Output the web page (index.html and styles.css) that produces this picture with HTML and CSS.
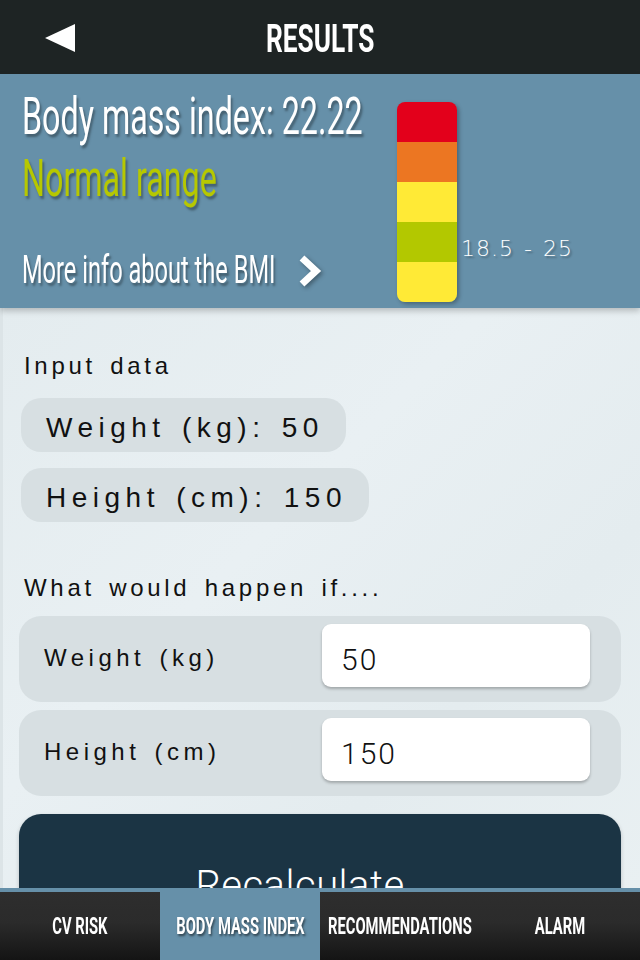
FILE: index.html
```html
<!DOCTYPE html>
<html lang="en">
<head>
<meta charset="utf-8">
<title>Results</title>
<link rel="stylesheet" href="styles.css">
</head>
<body>
<div class="app">
  <header class="topbar">
    <div class="topbar-left">
      <svg class="back" width="30" height="28" viewBox="0 0 30 28"><polygon points="0,14 30,0 30,28" fill="#fff"/></svg>
    </div>
    <h1 class="title"><span class="cond cond-title">RESULTS</span></h1>
    <div></div>
  </header>

  <section class="bmi">
    <div class="bmi-info">
      <div class="bmi-value"><span class="cond cond-big">Body mass index: 22.22</span></div>
      <div class="bmi-range"><span class="cond cond-big">Normal range</span></div>
      <div class="bmi-more">
        <span class="more-text"><span class="cond cond-more">More info about the BMI</span></span>
        <svg class="chevron" width="24" height="34" viewBox="0 0 24 34"><polyline points="4,4 18,17 4,30" fill="none" stroke="#fff" stroke-width="7" stroke-linejoin="miter"/></svg>
      </div>
    </div>
    <div class="scale">
      <div class="seg seg-red"></div>
      <div class="seg seg-orange"></div>
      <div class="seg seg-yellow"></div>
      <div class="seg seg-green"></div>
      <div class="seg seg-yellow"></div>
    </div>
    <div class="scale-label">18.5 - 25</div>
  </section>

  <main class="content">
    <h2 class="section-title first">Input data</h2>
    <div class="pill">Weight (kg): 50</div>
    <div class="pill">Height (cm): 150</div>

    <h2 class="section-title second">What would happen if....</h2>
    <div class="row">
      <div class="row-label">Weight (kg)</div>
      <div class="field">50</div>
    </div>
    <div class="row">
      <div class="row-label">Height (cm)</div>
      <div class="field">150</div>
    </div>
    <div class="button">Recalculate</div>
  </main>

  <nav class="tabs">
    <div class="tab"><span class="cond cond-tab">CV RISK</span></div>
    <div class="tab active"><span class="cond cond-tab">BODY MASS INDEX</span></div>
    <div class="tab"><span class="cond cond-tab">RECOMMENDATIONS</span></div>
    <div class="tab"><span class="cond cond-tab">ALARM</span></div>
  </nav>
</div>
</body>
</html>
```

FILE: styles.css
```css
* { box-sizing: border-box; }
html, body { margin: 0; padding: 0; }
body {
  font-family: "Liberation Sans", Arial, sans-serif;
  background: #e7eef1;
}
.app {
  width: 640px;
  height: 960px;
  display: flex;
  flex-direction: column;
  overflow: hidden;
}
.cond {
  display: inline-block;
  white-space: nowrap;
  transform-origin: left center;
}

/* top bar */
.topbar {
  height: 74px;
  flex: none;
  background: #1e2424;
  display: grid;
  grid-template-columns: 1fr auto 1fr;
  align-items: center;
}
.topbar-left { padding-left: 45px; display: flex; }
.back { display: block; margin-top: 1px; }
.title {
  margin: 0;
  padding-top: 4px;
  font-family: Roboto, sans-serif;
  font-weight: 700;
  font-size: 38px;
  line-height: 70px;
  color: #fff;
  width: 110px;
  text-align: left;
  margin-left: 2px;
}
.cond-title { transform: scaleX(0.69); }

/* bmi panel */
.bmi {
  height: 234px;
  flex: none;
  background: #6690a9;
  display: flex;
  align-items: flex-start;
  box-shadow: 0 3px 6px rgba(0,0,0,0.22);
  position: relative;
  z-index: 1;
}
.bmi-info {
  width: 397px;
  padding: 12px 0 0 22px;
  flex: none;
}
.bmi-value, .bmi-range {
  font-family: Roboto, sans-serif;
  font-weight: 400;
  font-size: 52px;
  line-height: 62px;
  color: #fff;
  text-shadow: 3px 3px 3px rgba(0,0,0,0.35);
}
.bmi-range { color: #b6c800; }
.cond-big { transform: scaleX(0.62); }
.bmi-more {
  margin-top: 37px;
  display: flex;
  align-items: center;
  font-family: Roboto, sans-serif;
  font-size: 39px;
  line-height: 46px;
  color: #fff;
  text-shadow: 3px 3px 3px rgba(0,0,0,0.35);
}
.more-text { width: 256px; flex: none; }
.cond-more { transform: scaleX(0.605); }
.chevron {
  margin-left: 20px;
  margin-top: 2px;
  filter: drop-shadow(2px 2px 2px rgba(0,0,0,0.35));
}
.scale {
  margin-top: 28px;
  width: 60px;
  height: 200px;
  flex: none;
  border-radius: 8px;
  overflow: hidden;
  display: flex;
  flex-direction: column;
  box-shadow: 2px 2px 4px rgba(0,0,0,0.3);
}
.seg { flex: 1; }
.seg-red { background: #e3001b; }
.seg-orange { background: #ec7622; }
.seg-yellow { background: #ffea36; }
.seg-green { background: #b3c800; }
.scale-label {
  margin: 163px 0 0 4px;
  font-family: "DejaVu Sans", sans-serif;
  font-weight: 200;
  font-size: 22px;
  line-height: 24px;
  letter-spacing: 1px;
  word-spacing: 2px;
  color: #fff;
  text-shadow: 2px 2px 2px rgba(0,0,0,0.3);
}

/* content */
.content {
  flex: 1;
  overflow: hidden;
  padding: 0 19px 0 16px;
  border-left: 3px solid #dce4e7;
  background: linear-gradient(135deg, #e4ecef 0%, #e9f0f3 40%, #e4ecef 70%, #e9f0f2 100%);
}
.section-title {
  margin: 0;
  font-weight: 400;
  font-size: 24px;
  line-height: 28px;
  letter-spacing: 3.7px;
  word-spacing: 4px;
  color: #111;
  padding-left: 5px;
}
.section-title.first { margin-top: 44px; margin-bottom: 18px; }
.section-title.second { margin-top: 52px; margin-bottom: 14px; }
.pill {
  display: table;
  margin-left: 2px;
  height: 54px;
  padding: 6px 22px 0 25px;
  line-height: 48px;
  font-size: 28px;
  letter-spacing: 5.5px;
  word-spacing: 3px;
  color: #111;
  background: #d7dfe2;
  border-radius: 20px;
}
.pill + .pill { margin-top: 16px; }
.row {
  height: 86px;
  display: flex;
  justify-content: space-between;
  align-items: flex-start;
  padding: 8px 31px 0 25px;
  background: #d7dfe2;
  border-radius: 22px;
}
.row + .row { margin-top: 8px; }
.row-label {
  margin-top: 20px;
  font-size: 24px;
  line-height: 28px;
  letter-spacing: 4.5px;
  word-spacing: 3px;
  color: #111;
}
.field {
  width: 268px;
  height: 63px;
  background: #fff;
  border-radius: 9px;
  box-shadow: 0 2px 3px rgba(0,0,0,0.25);
  padding: 8px 0 0 19px;
  font-family: Roboto, sans-serif;
  font-weight: 300;
  font-size: 30px;
  line-height: 55px;
  letter-spacing: 2px;
  color: #111;
}
.button {
  margin-top: 18px;
  height: 144px;
  padding-right: 40px;
  background: #1b3444;
  border-radius: 22px;
  color: #fff;
  font-family: Roboto, sans-serif;
  font-weight: 300;
  font-size: 40px;
  line-height: 144px;
  letter-spacing: 0.5px;
  text-align: center;
  box-shadow: 0 2px 4px rgba(0,0,0,0.2);
}

/* tabs */
.tabs {
  height: 72px;
  flex: none;
  display: grid;
  grid-template-columns: repeat(4, minmax(0, 1fr));
  border-top: 4px solid #6690a9;
  background: linear-gradient(#2e2e2e 0%, #2b2b2b 45%, #141414 100%);
  position: relative;
  z-index: 2;
}
.tab {
  min-width: 0;
  display: flex;
  justify-content: center;
  align-items: center;
  font-family: Roboto, sans-serif;
  font-weight: 700;
  font-size: 24px;
  color: #fff;
  overflow: visible;
}
.tab.active {
  background: #6690a9;
  margin-top: -4px;
  padding-top: 4px;
}
.tab.active .cond { text-shadow: 2px 2px 3px rgba(0,0,0,0.55); }
.cond-tab { transform: scaleX(0.615); transform-origin: center center; }
```
